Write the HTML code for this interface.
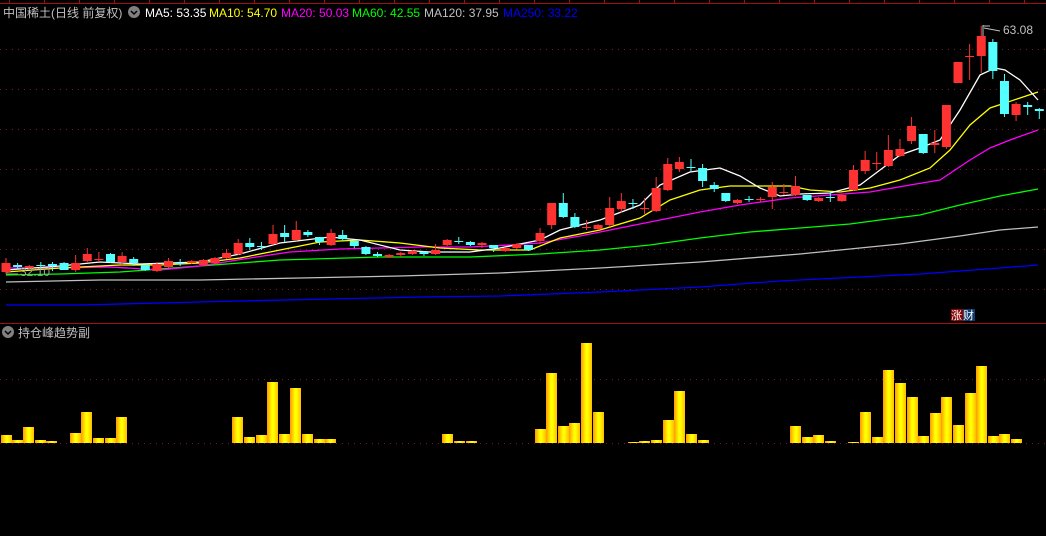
<!DOCTYPE html>
<html><head><meta charset="utf-8"><style>
html,body{margin:0;padding:0;background:#000;width:1046px;height:536px;overflow:hidden}
svg{display:block}
text{font-family:"Liberation Sans","Noto Sans CJK SC",sans-serif}
</style></head><body>
<svg id="s" width="1046" height="536" viewBox="0 0 1046 536" xmlns="http://www.w3.org/2000/svg">
<defs>
<linearGradient id="bg" x1="0" x2="1" y1="0" y2="0">
<stop offset="0" stop-color="#ff9900"/><stop offset="0.45" stop-color="#ffff00"/><stop offset="0.6" stop-color="#ffff00"/><stop offset="1" stop-color="#ffbb00"/>
</linearGradient>
</defs>
<g id="grid" stroke="#7a1a1a" stroke-width="1" stroke-dasharray="1,5"></g>
<line x1="0" y1="3.5" x2="1046" y2="3.5" stroke="#a01010"/>
<line x1="0" y1="323.5" x2="1046" y2="323.5" stroke="#a01010"/>
<g id="ticks" stroke="#a01010"></g>
<g id="ma"></g>
<g id="candles"></g>
<g id="bars"></g>
<text x="3" y="17" font-size="12" fill="#c0c0c0">中国稀土(日线 前复权)</text>
<circle cx="134" cy="12" r="6" fill="#808080"/>
<path d="M131 11 L134 14 L137 11" stroke="#000" stroke-width="1.5" fill="none"/>
<text x="145" y="17" font-size="12" fill="#ffffff">MA5: 53.35</text>
<text x="209" y="17" font-size="12" fill="#ffff00">MA10: 54.70</text>
<text x="281" y="17" font-size="12" fill="#ff00ff">MA20: 50.03</text>
<text x="352" y="17" font-size="12" fill="#00ff00">MA60: 42.55</text>
<text x="424" y="17" font-size="12" fill="#c0c0c0">MA120: 37.95</text>
<text x="503" y="17" font-size="12" fill="#0000ff">MA250: 33.22</text>
<text x="1003" y="34" font-size="12" fill="#c0c0c0">63.08</text>
<path d="M983 36 L983 25 M983 26 L990 26 M984 28 L1000 31" stroke="#c0c0c0" fill="none"/>
<text x="20" y="276" font-size="12" fill="#a0a0a0">32.10</text>
<path d="M6 274 L18 274" stroke="#a0a0a0"/>
<circle cx="8" cy="332" r="6" fill="#808080"/>
<path d="M5 331 L8 334 L11 331" stroke="#000" stroke-width="1.5" fill="none"/>
<text x="18" y="337" font-size="12" fill="#c0c0c0">持仓峰趋势副</text>
<rect x="951" y="309" width="12" height="12" fill="#8b0000"/>
<rect x="963" y="309" width="12" height="12" fill="#103a6a"/>
<text x="951" y="319" font-size="11" fill="#fff">涨</text>
<text x="963" y="319" font-size="11" fill="#fff">财</text>
</svg>
<script>
var NS="http://www.w3.org/2000/svg";
function el(p,t,a){var e=document.createElementNS(NS,t);for(var k in a)e.setAttribute(k,a[k]);document.getElementById(p).appendChild(e);return e;}
[49,89,129,169,209,249,289,379,443].forEach(function(y){el("grid","line",{x1:0,x2:1046,y1:y+.5,y2:y+.5});});
for(var x=9;x<1046;x+=35)el("ticks","line",{x1:x+.5,x2:x+.5,y1:0,y2:3});
var ma=[
["#c0c0c0",[[6,282],[100,280],[200,280],[300,278],[400,276],[500,273],[600,268],[700,262],[800,254],[850,249],[900,244],[960,236],[1000,230],[1038,227]]],
["#0000ff",[[6,305],[80,305],[160,303],[240,301],[330,299],[420,297],[500,296],[600,292],[700,287],[780,281],[840,278],[920,274],[1000,268],[1038,265]]],
["#00ff00",[[6,275],[60,274],[120,272],[200,266],[280,260],[380,257],[470,257],[540,254],[600,250],[650,245],[700,238],[750,232],[800,228],[850,224],[880,220],[920,215],[960,205],[1000,196],[1038,189]]],
["#ff00ff",[[6,268],[60,268],[110,267],[160,270],[200,266],[250,258],[290,252],[340,249],[380,248],[420,247],[470,247],[510,245],[540,243],[580,236],[620,228],[660,220],[700,212],[740,205],[790,198],[830,195],[870,192],[910,185],[940,180],[970,160],[990,148],[1010,140],[1038,130]]],
["#ffff00",[[6,272],[60,268],[120,265],[160,265],[200,263],[240,258],[280,250],[320,242],[360,240],[400,243],[440,248],[480,250],[530,250],[560,238],[600,230],[640,218],[670,200],[700,190],[730,186],[760,186],[790,186],[810,190],[840,192],[870,188],[900,180],[930,168],[950,150],[970,125],[990,108],[1005,103],[1020,98],[1038,92]]],
["#ffffff",[[6,270],[60,266],[100,262],[140,264],[200,262],[240,254],[280,243],[330,237],[360,240],[400,250],[430,252],[470,252],[500,248],[540,240],[560,230],[600,220],[640,205],[660,185],[690,172],[720,168],[740,176],[760,188],[780,196],[800,194],[830,193],[860,185],[880,170],[900,155],[920,148],[940,140],[960,110],[980,75],[995,68],[1005,70],[1020,80],[1038,100]]]
];
ma.forEach(function(m){el("ma","polyline",{points:m[1].map(function(p){return p.join(",")}).join(" "),stroke:m[0],fill:"none","stroke-width":1.3});});
// [color, bodyTop, bodyBottom, wickTop, wickBottom]
var C=[
["r",263,272,258,274],["c",265,267,263,269],["r",266,268,265,270],["c",265,266,262,270],["c",264,266,262,271],["c",263,270,262,270],["r",263,270,255,272],["r",254,261,248,262],["r",259,260,252,262],["c",254,262,253,263],
["r",256,262,252,266],["c",259,263,257,266],["c",265,270,265,271],["r",264,271,262,272],["r",261,267,258,268],["c",263,264,259,266],["r",261,263,260,264],["r",260,265,259,266],["r",258,263,257,264],["r",253,258,249,259],
["r",243,254,239,255],["c",243,247,238,250],["c",246,247,242,250],["r",234,244,225,245],["c",233,237,225,242],["r",230,240,221,241],["c",232,235,230,237],["c",237,242,237,245],["r",233,245,229,246],["c",235,239,230,241],
["c",241,246,241,248],["c",247,254,246,255],["c",254,256,252,257],["r",255,257,254,258],["r",253,255,252,257],["r",251,254,250,255],["c",252,254,251,256],["r",250,254,244,255],["r",240,245,239,246],["c",241,242,237,244],
["c",242,245,241,246],["r",243,245,242,248],["c",245,248,245,252],["r",248,251,247,252],["r",244,248,243,249],["c",245,250,245,251],["r",233,241,228,244],["r",203,225,203,229],["c",203,217,193,218],["c",217,227,213,228],
["r",227,228,220,230],["r",225,229,224,230],["r",208,225,197,226],["r",201,209,193,213],["c",203,204,199,209],["r",208,209,198,214],["r",188,211,177,212],["r",164,190,158,191],["r",162,169,157,172],["c",167,168,159,172],
["c",168,181,164,187],["c",185,189,182,192],["c",193,201,193,202],["r",200,203,199,204],["c",199,200,196,202],["r",199,200,197,202],["r",187,197,182,209],["r",192,193,184,195],["r",186,195,176,196],["c",195,200,195,201],
["r",198,201,197,202],["c",197,198,191,202],["r",195,201,194,202],["r",170,190,165,191],["r",160,171,151,174],["r",163,164,152,170],["r",150,166,135,167],["r",149,156,139,157],["r",126,141,117,144],["c",134,153,134,154],
["r",143,145,130,153],["r",105,147,105,149],["r",62,83,62,83],["r",56,57,44,80],["r",36,56,26,73],["c",42,71,39,79],["c",81,114,74,117],["r",104,115,102,121],["c",105,107,102,115],["c",109,111,108,119]
];
C.forEach(function(c,i){var x=6+i*11.61;var col=c[0]=="r"?"#ff3232":"#54ffff";
el("candles","line",{x1:x,x2:x,y1:c[3],y2:c[4],stroke:col,"stroke-width":1});
var h=Math.max(1,c[2]-c[1]);el("candles","rect",{x:x-4.5,y:c[1],width:9,height:h,fill:col});});
var B=[[1,435],[12,440],[23,427],[35,440],[46,441],[70,433],[81,412],[93,438],[105,438],[116,417],[232,417],[244,437],[256,435],[267,382],[279,434],[290,388],[302,434],[314,439],[325,439],[442,434],[454,441],[466,441],[535,429],[546,373],[558,426],[569,423],[581,343],[593,412],[628,442],[639,441],[651,440],[663,420],[674,391],[686,434],[698,440],[790,426],[802,437],[813,435],[825,441],[848,442],[860,412],[872,437],[883,370],[895,383],[907,397],[918,436],[930,413],[941,397],[953,425],[965,393],[976,366],[988,436],[999,434],[1011,439]];
B.forEach(function(b){el("bars","rect",{x:b[0],y:b[1],width:11,height:443-b[1],fill:"url(#bg)"});});
</script>
</body></html>
